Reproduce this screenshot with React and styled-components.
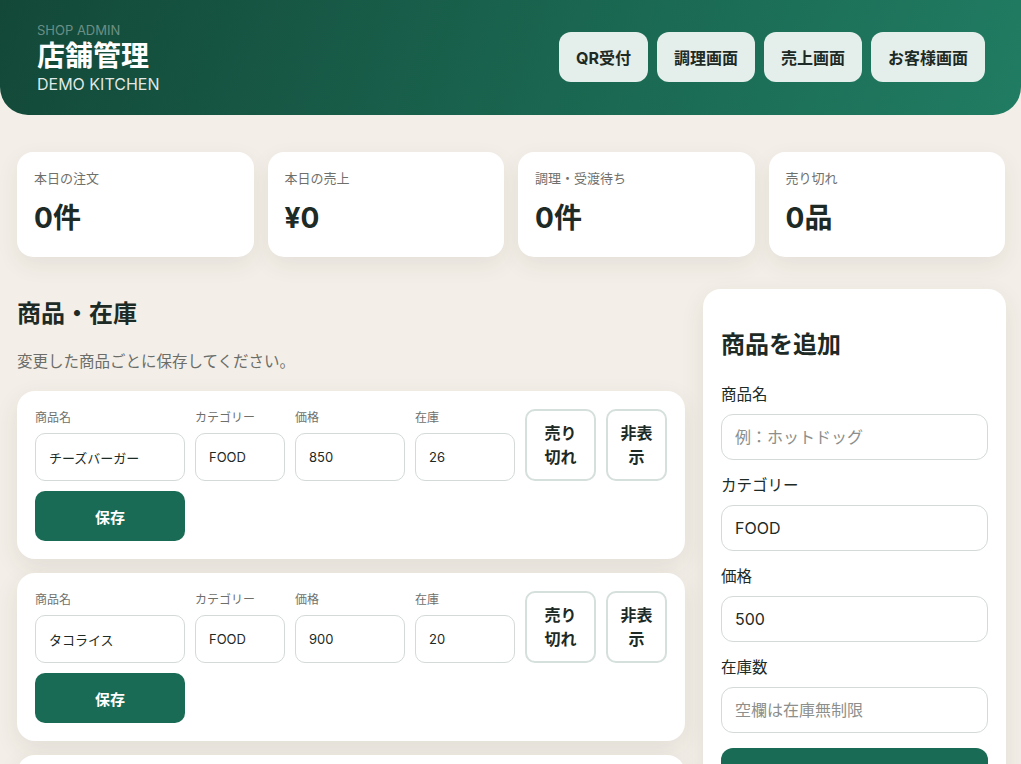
import React from 'react';
import styled, { createGlobalStyle } from 'styled-components';

const GlobalStyle = createGlobalStyle`
  * { box-sizing: border-box; }
  body {
    margin: 0;
    background: #f3efe8;
    font-family: "Inter", "Noto Sans CJK JP", sans-serif;
    color: #1d2a25;
  }
`;

const stats = [
  { label: '本日の注文', value: '0件' },
  { label: '本日の売上', value: '¥0' },
  { label: '調理・受渡待ち', value: '0件' },
  { label: '売り切れ', value: '0品' },
];

const products = [
  { name: 'チーズバーガー', category: 'FOOD', price: '850', stock: '26' },
  { name: 'タコライス', category: 'FOOD', price: '900', stock: '20' },
  { name: 'フライドポテト', category: 'FOOD', price: '400', stock: '30' },
];

export default function App() {
  return (
    <>
      <GlobalStyle />
      <Header>
        <Brand>
          <Eyebrow>SHOP ADMIN</Eyebrow>
          <Title>店舗管理</Title>
          <ShopName>DEMO KITCHEN</ShopName>
        </Brand>
        <Nav>
          {['QR受付', '調理画面', '売上画面', 'お客様画面'].map((t) => (
            <NavButton key={t}>{t}</NavButton>
          ))}
        </Nav>
      </Header>

      <Page>
        <StatGrid>
          {stats.map((s) => (
            <StatCard key={s.label}>
              <StatLabel>{s.label}</StatLabel>
              <StatValue>{s.value}</StatValue>
            </StatCard>
          ))}
        </StatGrid>

        <Main>
          <section>
            <SectionTitle>商品・在庫</SectionTitle>
            <Hint>変更した商品ごとに保存してください。</Hint>
            <List>
              {products.map((p) => (
                <ProductCard key={p.name}>
                  <Field>
                    <SmallLabel>商品名</SmallLabel>
                    <SmallInput defaultValue={p.name} />
                  </Field>
                  <Field>
                    <SmallLabel>カテゴリー</SmallLabel>
                    <SmallInput defaultValue={p.category} />
                  </Field>
                  <Field>
                    <SmallLabel>価格</SmallLabel>
                    <SmallInput defaultValue={p.price} />
                  </Field>
                  <Field>
                    <SmallLabel>在庫</SmallLabel>
                    <SmallInput defaultValue={p.stock} />
                  </Field>
                  <Toggle>売り<br />切れ</Toggle>
                  <Toggle>非表<br />示</Toggle>
                  <SaveButton>保存</SaveButton>
                </ProductCard>
              ))}
            </List>
          </section>

          <AddPanel>
            <PanelTitle>商品を追加</PanelTitle>
            <FormField>
              <FormLabel>商品名</FormLabel>
              <FormInput placeholder="例：ホットドッグ" />
            </FormField>
            <FormField>
              <FormLabel>カテゴリー</FormLabel>
              <FormInput defaultValue="FOOD" />
            </FormField>
            <FormField>
              <FormLabel>価格</FormLabel>
              <FormInput defaultValue="500" />
            </FormField>
            <FormField>
              <FormLabel>在庫数</FormLabel>
              <FormInput placeholder="空欄は在庫無制限" />
            </FormField>
            <AddButton>追加する</AddButton>
          </AddPanel>
        </Main>
      </Page>
    </>
  );
}

const Header = styled.header`
  height: 115px;
  padding: 0 36px 0 37px;
  display: flex;
  align-items: center;
  justify-content: space-between;
  background: linear-gradient(110deg, #134838 0%, #1a6650 55%, #207c62 100%);
  border-radius: 0 0 28px 28px;
`;

const Brand = styled.div`
  display: flex;
  flex-direction: column;
  margin-top: 1px;
`;

const Eyebrow = styled.div`
  font-size: 13px;
  line-height: 14px;
  color: rgba(255, 255, 255, 0.38);
`;

const Title = styled.h1`
  margin: 1px 0 0;
  font-size: 28px;
  line-height: 36px;
  font-weight: 700;
  color: #fff;
`;

const ShopName = styled.div`
  font-size: 16px;
  line-height: 20px;
  color: rgba(255, 255, 255, 0.88);
`;

const Nav = styled.nav`
  display: flex;
  gap: 9px;
  margin-top: -2px;
`;

const NavButton = styled.button`
  height: 50px;
  padding: 0 17px;
  border: none;
  border-radius: 12px;
  background: #e4eeea;
  color: #1d2a25;
  font-family: inherit;
  font-size: 16px;
  font-weight: 700;
`;

const Page = styled.main`
  padding: 37px 16px 0 17px;
`;

const StatGrid = styled.div`
  display: grid;
  grid-template-columns: repeat(4, 1fr);
  gap: 14px;
`;

const StatCard = styled.div`
  height: 105px;
  padding: 17px 17px;
  background: #fff;
  border-radius: 16px;
  box-shadow: 0 8px 22px rgba(60, 50, 30, 0.08);
`;

const StatLabel = styled.div`
  font-size: 13px;
  line-height: 18px;
  color: #6f706c;
`;

const StatValue = styled.div`
  margin-top: 13px;
  font-size: 28px;
  line-height: 36px;
  font-weight: 700;
  color: #1d2a25;
`;

const Main = styled.div`
  margin-top: 32px;
  display: grid;
  grid-template-columns: 1fr 303px;
  gap: 18px;
  align-items: start;
`;

const SectionTitle = styled.h2`
  margin: 8px 0 0;
  font-size: 24px;
  line-height: 33px;
  font-weight: 700;
`;

const Hint = styled.p`
  margin: 21px 0 0;
  font-size: 15.5px;
  line-height: 22px;
  color: #6b6d69;
`;

const List = styled.div`
  margin-top: 18px;
  display: flex;
  flex-direction: column;
  gap: 14px;
`;

const ProductCard = styled.div`
  padding: 18px;
  background: #fff;
  border-radius: 18px;
  box-shadow: 0 8px 24px rgba(60, 50, 30, 0.09);
  display: grid;
  grid-template-columns: 150px 90px 110px 100px 71px 61px;
  gap: 10px;
  align-items: stretch;
`;

const Field = styled.div`
  display: flex;
  flex-direction: column;
`;

const SmallLabel = styled.span`
  font-size: 12px;
  line-height: 14px;
  margin: 2px 0 8px;
  color: #6f706c;
`;

const SmallInput = styled.input`
  width: 100%;
  height: 48px;
  padding: 0 13px;
  border: 1px solid #d3dad7;
  border-radius: 10px;
  font-family: inherit;
  font-size: 13px;
  color: #1d2a25;
  background: #fff;
`;

const Toggle = styled.button`
  border: 2px solid #d5dfdc;
  border-radius: 10px;
  background: #fff;
  font-family: inherit;
  font-size: 16px;
  line-height: 24px;
  font-weight: 700;
  color: #1d2a25;
  padding: 0;
`;

const SaveButton = styled.button`
  grid-column: 1;
  height: 50px;
  border: none;
  border-radius: 10px;
  background: #1a6b55;
  color: #fff;
  font-family: inherit;
  font-size: 15px;
  font-weight: 700;
`;

const AddPanel = styled.aside`
  padding: 18px 18px 24px;
  background: #fff;
  border-radius: 18px;
  box-shadow: 0 8px 24px rgba(60, 50, 30, 0.09);
`;

const PanelTitle = styled.h2`
  margin: 21px 0 23px;
  font-size: 24px;
  line-height: 33px;
  font-weight: 700;
`;

const FormField = styled.div`
  display: flex;
  flex-direction: column;
  margin-bottom: 15px;
`;

const FormLabel = styled.label`
  font-size: 15.5px;
  line-height: 22px;
  margin-bottom: 8px;
  color: #1d2a25;
`;

const FormInput = styled.input`
  height: 46px;
  padding: 0 13px;
  border: 1px solid #d3dad7;
  border-radius: 12px;
  font-family: inherit;
  font-size: 16px;
  color: #1d2a25;
  &::placeholder { color: #8c8f8c; }
`;

const AddButton = styled.button`
  width: 100%;
  height: 50px;
  border: none;
  border-radius: 12px;
  background: #1a6b55;
  color: #fff;
  font-family: inherit;
  font-size: 16px;
  font-weight: 700;
`;
